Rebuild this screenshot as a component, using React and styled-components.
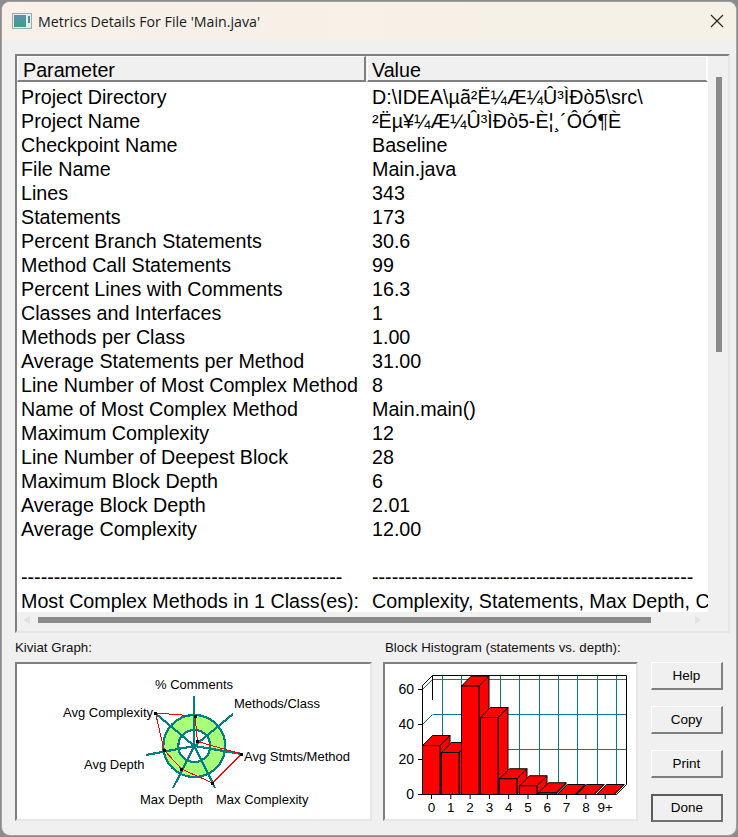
import React from "react";
import styled, { createGlobalStyle } from "styled-components";

const GlobalStyle = createGlobalStyle`
  html, body {
    margin: 0;
    padding: 0;
    background: #8c8c8c;
  }
`;

const Screen = styled.div`
  width: 738px;
  height: 837px;
  padding: 1px 1px 1px 1px;
  box-sizing: border-box;
`;

const Window = styled.div`
  height: 100%;
  box-sizing: border-box;
  border: 1px solid #a0a0a0;
  border-radius: 9px;
  overflow: hidden;
  background: #f0f0f0;
  display: flex;
  flex-direction: column;
  font-family: "Liberation Sans", Arial, sans-serif;
  color: #000;
`;

const TitleBar = styled.div`
  height: 38px;
  flex: none;
  display: flex;
  align-items: center;
  padding: 0 12px 0 10px;
  background: linear-gradient(90deg, #f8f0e9, #f5f1e6);
`;

const AppIcon = styled.svg`
  width: 20px;
  height: 16px;
  flex: none;
  margin-right: 6px;
`;

const Title = styled.div`
  flex: 1;
  font-family: "Open Sans", sans-serif;
  font-size: 14.2px;
  color: #1a1a1a;
`;

const CloseIcon = styled.svg`
  width: 14px;
  height: 14px;
  flex: none;
`;

const Body = styled.div`
  flex: 1;
  padding: 14px 5px 0 13px;
`;

const ListPanel = styled.div`
  width: 715px;
  height: 579px;
  box-sizing: border-box;
  border-style: solid;
  border-width: 2px;
  border-color: #808080 #e6e6e6 #e6e6e6 #808080;
  display: grid;
  grid-template-columns: 691px 20px;
  grid-template-rows: 556px 19px;
`;

const ListView = styled.div`
  background: #fff;
  overflow: hidden;
`;

const HeaderRow = styled.div`
  display: grid;
  grid-template-columns: 349px 1fr;
  gap: 1px;
  height: 26px;
  background: #f0f0f0;
`;

const HeaderCell = styled.div`
  box-sizing: border-box;
  height: 26px;
  border-style: solid;
  border-width: 1px 2px 2px 1px;
  border-color: #fff ${(p) => (p.$last ? "#fff" : "#808080")} #808080 #fff;
  font-size: 19.7px;
  line-height: 26px;
  padding-left: ${(p) => p.$pad}px;
`;

const Rows = styled.div`
  padding-top: 3px;
`;

const Row = styled.div`
  display: grid;
  grid-template-columns: 355px 336px;
  height: 24px;
  line-height: 24px;
  font-size: 19.7px;
  white-space: nowrap;
`;

const Param = styled.div`
  padding-left: 4px;
`;

const Value = styled.div`
  overflow: hidden;
`;

const VTrack = styled.div`
  padding: 21px 0 0 8px;
`;

const VThumb = styled.div`
  width: 6px;
  height: 275px;
  background: #8a8a8a;
`;

const HTrack = styled.div`
  display: flex;
  align-items: center;
  padding: 0 0 3px 6px;
`;

const HThumb = styled.div`
  width: 613px;
  height: 6px;
  margin: 0 44px 0 8px;
  background: #8a8a8a;
`;

const Arrow = styled.div`
  width: 0;
  height: 0;
  border-style: solid;
  border-color: transparent;
  border-width: 4.5px 0;
  ${(p) => (p.$right ? "border-left: 6px solid #e2e2e2;" : "border-right: 7px solid #e2e2e2;")}
`;

const Corner = styled.div``;

const Bottom = styled.div`
  display: flex;
  margin-top: 7px;
`;

const ChartBlock = styled.div`
  width: ${(p) => p.$width}px;
  margin-right: ${(p) => p.$gap}px;
`;

const ChartLabel = styled.div`
  height: 22px;
  font-size: 13.3px;
  line-height: 16px;
  white-space: nowrap;
  padding-left: ${(p) => p.$pad || 0}px;
  color: #111;
`;

const ChartPanel = styled.div`
  height: 159px;
  box-sizing: border-box;
  border-style: solid;
  border-width: 2px;
  border-color: #808080 #e6e6e6 #e6e6e6 #808080;
  background: #fff;
  overflow: hidden;
`;

const ChartSvg = styled.svg`
  display: block;
  font-family: "Liberation Sans", Arial, sans-serif;
  font-size: 13px;
  fill: #000;
`;

const Buttons = styled.div`
  display: flex;
  flex-direction: column;
  gap: 16px;
  padding-top: 22px;
`;

const Button = styled.button`
  width: 72px;
  height: 28px;
  padding: 0 0 ${(p) => (p.$primary ? "2px" : "0")};
  box-sizing: border-box;
  background: #f0f0f0;
  font-family: "Liberation Sans", Arial, sans-serif;
  font-size: 13.5px;
  color: #000;
  border-style: solid;
  border-width: ${(p) => (p.$primary ? "2px" : "1px 2px 2px 1px")};
  border-color: ${(p) =>
    p.$primary ? "#5a5a5a #707070 #707070 #5a5a5a" : "#fff #808080 #808080 #fff"};
`;

const metrics = [
  ["Project Directory", "D:\\IDEA\\µã²Ë¼Æ¼Û³ÌÐò5\\src\\"],
  ["Project Name", "²Ëµ¥¼Æ¼Û³ÌÐò5-È¦¸´ÔÓ¶È"],
  ["Checkpoint Name", "Baseline"],
  ["File Name", "Main.java"],
  ["Lines", "343"],
  ["Statements", "173"],
  ["Percent Branch Statements", "30.6"],
  ["Method Call Statements", "99"],
  ["Percent Lines with Comments", "16.3"],
  ["Classes and Interfaces", "1"],
  ["Methods per Class", "1.00"],
  ["Average Statements per Method", "31.00"],
  ["Line Number of Most Complex Method", "8"],
  ["Name of Most Complex Method", "Main.main()"],
  ["Maximum Complexity", "12"],
  ["Line Number of Deepest Block", "28"],
  ["Maximum Block Depth", "6"],
  ["Average Block Depth", "2.01"],
  ["Average Complexity", "12.00"],
  ["", ""],
  ["-".repeat(49), "-".repeat(49)],
  ["Most Complex Methods in 1 Class(es):", "Complexity, Statements, Max Depth, Calls"],
];

const CENTER = [194.3, 746];
const spokes = [
  [194, 696],
  [233, 714],
  [242, 754],
  [215, 788],
  [173, 788],
  [146, 755],
  [155, 713],
];
const shape = [
  [195, 716],
  [197.5, 741.5],
  [241.5, 754],
  [212.5, 783],
  [181.5, 769],
  [164, 750],
  [155.5, 713],
];
const kiviatLabels = [
  ["% Comments", 155, 689],
  ["Methods/Class", 234, 708],
  ["Avg Stmts/Method", 244, 761],
  ["Max Complexity", 216, 804],
  ["Max Depth", 140, 804],
  ["Avg Depth", 84, 769],
  ["Avg Complexity", 63, 717],
];

const KiviatGraph = () => (
  <ChartSvg width="353" height="155" viewBox="17 664 353 155">
    <g shapeRendering="crispEdges">
      <circle cx={CENTER[0]} cy={CENTER[1]} r="31" fill="#a8ff78" stroke="#008080" strokeWidth="2.2" />
      <circle cx={CENTER[0]} cy={CENTER[1]} r="16" fill="#fff" stroke="#008080" strokeWidth="2.2" />
      {spokes.map(([x, y]) => (
        <line key={x + "-" + y} x1={CENTER[0]} y1={CENTER[1]} x2={x} y2={y} stroke="#008080" strokeWidth="2.2" />
      ))}
      <polygon points={shape.map((p) => p.join(",")).join(" ")} fill="none" stroke="#ff0000" strokeWidth="1" />
      {shape.map(([x, y]) => (
        <rect key={x} x={x - 1.5} y={y - 1.5} width="3" height="3" fill="#000" />
      ))}
    </g>
    {kiviatLabels.map(([text, x, y]) => (
      <text key={text} x={x} y={y}>
        {text}
      </text>
    ))}
  </ChartSvg>
);

const BASE = 794.5;
const STEP = 19.3;
const bars = [28, 24, 62, 44, 9, 5, 1, 0, 0, 0];
const binLabels = ["0", "1", "2", "3", "4", "5", "6", "7", "8", "9+"];

const Histogram = () => (
  <ChartSvg width="251" height="155" viewBox="385 664 251 155">
    <g stroke="#008080" strokeWidth="1" shapeRendering="crispEdges">
      {[679.5, 714.5, 749.5].map((y) => (
        <line key={y} x1="432.5" y1={y} x2="626.5" y2={y} />
      ))}
      {bars.map((_, i) => (
        <line key={i} x1={442 + i * 19.4} y1="676" x2={442 + i * 19.4} y2="784.5" />
      ))}
    </g>
    <g stroke="#008080" strokeWidth="1" fill="none">
      <line x1="422.5" y1="689.5" x2="432.5" y2="679.5" />
      <line x1="422.5" y1="724.5" x2="432.5" y2="714.5" />
    </g>
    <g stroke="#000" strokeWidth="1" fill="none">
      <polyline points="422.5,685.5 432.5,675.5 626.5,675.5 626.5,784.5 616.5,794.5 422.5,794.5 422.5,685.5" />
      <line x1="432.5" y1="675.5" x2="432.5" y2="700" />
      {[689.5, 724.5, 759.5, 794.5].map((y) => (
        <line key={y} x1="418" y1={y} x2="422.5" y2={y} />
      ))}
      {bars.map((_, i) => (
        <line key={i} x1={431.5 + i * STEP} y1="794.5" x2={431.5 + i * STEP} y2="799" />
      ))}
    </g>
    {bars.map((value, i) => {
      const left = Math.round(422 + i * STEP) + 0.5;
      const right = left + 17.5;
      const top = BASE - value * 1.75;
      return (
        <g key={i} fill="#ff0000" stroke="#000" strokeWidth="1">
          <polygon points={`${right},${top} ${right + 10},${top - 10} ${right + 10},${BASE - 10} ${right},${BASE}`} />
          <polygon points={`${left},${top} ${left + 10},${top - 10} ${right + 10},${top - 10} ${right},${top}`} />
          <rect x={left} y={top} width="17.5" height={value * 1.75} />
        </g>
      );
    })}
    {[["60", 694], ["40", 729], ["20", 764], ["0", 799]].map(([text, y]) => (
      <text key={text} x="414" y={y} textAnchor="end" fontSize="14">
        {text}
      </text>
    ))}
    {binLabels.map((text, i) => (
      <text key={text} x={431.5 + i * STEP} y="812" textAnchor="middle" fontSize="13.5">
        {text}
      </text>
    ))}
  </ChartSvg>
);

const App = () => (
  <Screen>
    <GlobalStyle />
    <Window>
      <TitleBar>
        <AppIcon viewBox="0 0 20 16">
          <defs>
            <linearGradient id="iconFill" x1="0" y1="0" x2="0" y2="1">
              <stop offset="0" stopColor="#5f8fae" />
              <stop offset="1" stopColor="#3f9f86" />
            </linearGradient>
          </defs>
          <rect x="0.5" y="0.5" width="19" height="15" fill="#e8ecee" stroke="#a4a9ae" />
          <rect x="2" y="2" width="12" height="12" fill="url(#iconFill)" />
          <rect x="16" y="3" width="2" height="7" fill="#3f9a8a" />
        </AppIcon>
        <Title>Metrics Details For File 'Main.java'</Title>
        <CloseIcon viewBox="0 0 14 14">
          <path d="M1 1 L13 13 M13 1 L1 13" stroke="#222" strokeWidth="1.1" fill="none" />
        </CloseIcon>
      </TitleBar>
      <Body>
        <ListPanel>
          <ListView>
            <HeaderRow>
              <HeaderCell $pad={5}>Parameter</HeaderCell>
              <HeaderCell $pad={4} $last>Value</HeaderCell>
            </HeaderRow>
            <Rows>
              {metrics.map(([param, value], i) => (
                <Row key={i}>
                  <Param>{param}</Param>
                  <Value>{value}</Value>
                </Row>
              ))}
            </Rows>
          </ListView>
          <VTrack>
            <VThumb />
          </VTrack>
          <HTrack>
            <Arrow />
            <HThumb />
            <Arrow $right />
          </HTrack>
          <Corner />
        </ListPanel>
        <Bottom>
          <ChartBlock $width={357} $gap={11}>
            <ChartLabel>Kiviat Graph:</ChartLabel>
            <ChartPanel>
              <KiviatGraph />
            </ChartPanel>
          </ChartBlock>
          <ChartBlock $width={255} $gap={13}>
            <ChartLabel $pad={2}>Block Histogram (statements vs. depth):</ChartLabel>
            <ChartPanel>
              <Histogram />
            </ChartPanel>
          </ChartBlock>
          <Buttons>
            <Button>Help</Button>
            <Button>Copy</Button>
            <Button>Print</Button>
            <Button $primary>Done</Button>
          </Buttons>
        </Bottom>
      </Body>
    </Window>
  </Screen>
);

export default App;
